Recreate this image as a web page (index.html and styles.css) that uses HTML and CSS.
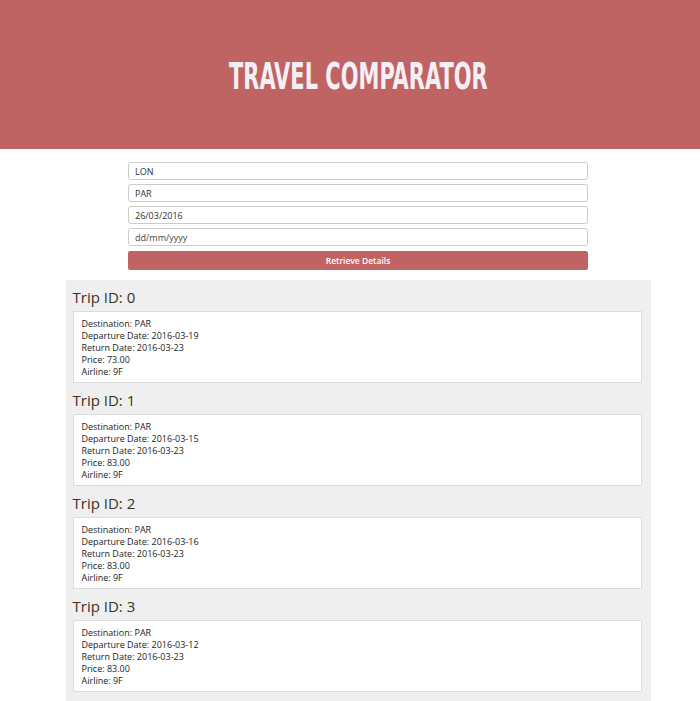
FILE: index.html
```
<!DOCTYPE html>
<html>
<head>
<meta charset="utf-8">
<title>Travel Comparator</title>
<link rel="stylesheet" href="styles.css">
</head>
<body>
<header class="header">
  <h1 class="title"><span class="title-text">TRAVEL COMPARATOR</span></h1>
</header>
<main class="main">
  <form class="search">
    <input class="field" type="text" value="LON">
    <input class="field" type="text" value="PAR">
    <input class="field" type="text" value="26/03/2016">
    <input class="field placeholder" type="text" value="dd/mm/yyyy">
    <button class="btn" type="button">Retrieve Details</button>
  </form>
  <section class="results">
    <div class="trip">
      <h2 class="trip-title">Trip ID: 0</h2>
      <div class="card">
        <div>Destination: PAR</div>
        <div>Departure Date: 2016-03-19</div>
        <div>Return Date: 2016-03-23</div>
        <div>Price: 73.00</div>
        <div>Airline: 9F</div>
      </div>
    </div>
    <div class="trip">
      <h2 class="trip-title">Trip ID: 1</h2>
      <div class="card">
        <div>Destination: PAR</div>
        <div>Departure Date: 2016-03-15</div>
        <div>Return Date: 2016-03-23</div>
        <div>Price: 83.00</div>
        <div>Airline: 9F</div>
      </div>
    </div>
    <div class="trip">
      <h2 class="trip-title">Trip ID: 2</h2>
      <div class="card">
        <div>Destination: PAR</div>
        <div>Departure Date: 2016-03-16</div>
        <div>Return Date: 2016-03-23</div>
        <div>Price: 83.00</div>
        <div>Airline: 9F</div>
      </div>
    </div>
    <div class="trip">
      <h2 class="trip-title">Trip ID: 3</h2>
      <div class="card">
        <div>Destination: PAR</div>
        <div>Departure Date: 2016-03-12</div>
        <div>Return Date: 2016-03-23</div>
        <div>Price: 83.00</div>
        <div>Airline: 9F</div>
      </div>
    </div>
  </section>
</main>
</body>
</html>
```

FILE: styles.css
```
html, body {
  margin: 0;
  padding: 0;
  background: #ffffff;
  font-family: "Open Sans", "DejaVu Sans", sans-serif;
  overflow: hidden;
}

.header {
  height: 149px;
  background: #c06363;
  padding-left: 16px;
  display: flex;
  align-items: center;
  justify-content: center;
}

.title {
  margin: 0;
  padding-top: 4px;
  font-family: "DejaVu Sans Condensed", "DejaVu Sans", sans-serif;
  font-stretch: condensed;
  font-weight: bold;
  font-size: 37px;
  line-height: 40px;
  color: #f4eff4;
}

.title-text {
  display: inline-block;
  transform: scaleX(0.63);
}

.main {
  padding-left: 16px;
}

.search {
  width: 460px;
  margin: 13px auto 0;
  display: flex;
  flex-direction: column;
  gap: 4px;
}

.field {
  box-sizing: border-box;
  height: 18px;
  margin: 0;
  padding: 0 6px;
  border: 1px solid #cccccc;
  border-radius: 3px;
  font-family: "Open Sans", sans-serif;
  font-size: 9px;
  color: #333333;
  background: #ffffff;
  outline: none;
}

.field.placeholder {
  color: #444444;
}

.btn {
  box-sizing: border-box;
  height: 19px;
  margin-top: 1px;
  border: none;
  border-radius: 2px;
  background: #c06363;
  color: #ffffff;
  font-family: "Open Sans", sans-serif;
  font-weight: 600;
  font-size: 8.5px;
  padding: 0;
}

.results {
  width: 585px;
  box-sizing: border-box;
  margin: 10px auto 0;
  background: #efefef;
  padding: 7px 9px 9px 7px;
}

.trip + .trip {
  margin-top: 7px;
}

.trip-title {
  margin: 0 0 4px;
  font-weight: normal;
  font-size: 15px;
  line-height: 20px;
  color: #3b3222;
}

.card {
  background: #ffffff;
  border: 1px solid #dddddd;
  padding: 6px 8px 4px;
  font-size: 9px;
  line-height: 12px;
  color: #222222;
}
```
